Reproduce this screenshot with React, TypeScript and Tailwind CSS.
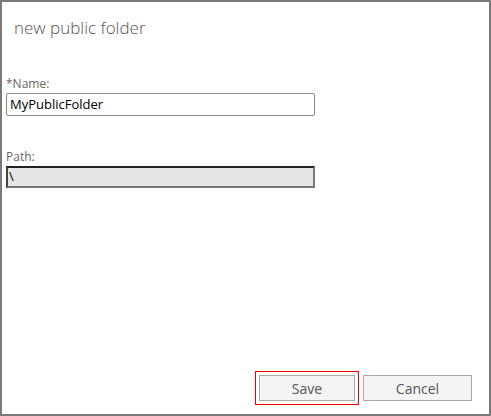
export default function App() {
  return (
    <div
      className="w-[491px] h-[416px] bg-white border-2 border-[#7a7a7a] flex flex-col text-[#333]"
      style={{ fontFamily: '"Open Sans", "Liberation Sans", sans-serif' }}
    >
      <h1 className="ml-[12px] mt-[14px] text-[17px] font-light text-[#555] leading-[24px]">new public folder</h1>

      <div className="ml-[4px] mt-[36px] flex flex-col">
        <label className="text-[12px] leading-[16px] text-[#666]">*Name:</label>
        <div className="mt-[1px] w-[309px] h-[23px] border border-[#8a8a8a] rounded-[2px] px-[3px] flex items-center text-[13px] text-black">
          MyPublicFolder
        </div>

        <label className="mt-[33px] text-[12px] leading-[16px] text-[#666]">Path:</label>
        <div className="mt-[1px] w-[309px] h-[22px] bg-[#e6e6e6] border-2 border-t-[#222] border-l-[#444] border-r-[#777] border-b-[#777] px-[1px] flex items-center text-[13px] text-black">
          \
        </div>
      </div>

      <div className="mt-auto mb-[9px] mr-[17px] flex justify-end items-center gap-[4px]">
        <div className="border border-[#e00] p-[3px]">
          <button className="w-[96px] h-[26px] bg-[#f4f4f4] border border-[#a9a9a9] text-[14px] text-[#555]">Save</button>
        </div>
        <button className="w-[109px] h-[26px] bg-[#f4f4f4] border border-[#a9a9a9] text-[14px] text-[#555]">Cancel</button>
      </div>
    </div>
  );
}
